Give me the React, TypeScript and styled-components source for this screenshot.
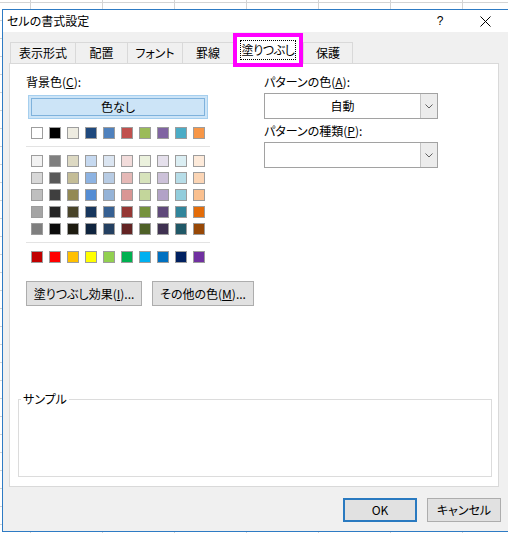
import React from 'react';
import styled, { createGlobalStyle } from 'styled-components';

const themeColors = ['#FFFFFF', '#000000', '#EEECE1', '#1F497D', '#4F81BD', '#C0504D', '#9BBB59', '#8064A2', '#4BACC6', '#F79646'];

const shadeRows = [
  ['#F2F2F2', '#7F7F7F', '#DDD9C3', '#C6D9F0', '#DBE5F1', '#F2DCDB', '#EBF1DD', '#E5E0EC', '#DBEEF3', '#FDEADA'],
  ['#D8D8D8', '#595959', '#C4BD97', '#8DB3E2', '#B8CCE4', '#E5B9B7', '#D7E3BC', '#CCC1D9', '#B7DDE8', '#FBD5B5'],
  ['#BFBFBF', '#3F3F3F', '#938953', '#548DD4', '#95B3D7', '#D99694', '#C3D69B', '#B2A2C7', '#92CDDC', '#FAC08F'],
  ['#A5A5A5', '#262626', '#494429', '#17365D', '#366092', '#953734', '#76923C', '#5F497A', '#31859B', '#E36C09'],
  ['#7F7F7F', '#0C0C0C', '#1D1B10', '#0F243E', '#244061', '#632423', '#4F6128', '#3F3151', '#205867', '#974806'],
];

const standardColors = ['#C00000', '#FF0000', '#FFC000', '#FFFF00', '#92D050', '#00B050', '#00B0F0', '#0070C0', '#002060', '#7030A0'];

const tabs = [
  { label: '表示形式', width: 65 },
  { label: '配置', width: 52 },
  { label: 'フォント', width: 55 },
  { label: '罫線', width: 51 },
  { label: '塗りつぶし', width: 70, active: true },
  { label: '保護', width: 50 },
];

const GlobalStyle = createGlobalStyle`
  html, body {
    margin: 0;
    padding: 0;
  }

  body {
    width: 508px;
    height: 533px;
    overflow: hidden;
    background-color: #fff;
    /* the spreadsheet grid behind the dialog */
    background-image:
      linear-gradient(to right, #d4d4d4 1px, transparent 1px),
      linear-gradient(to bottom, #d4d4d4 1px, transparent 1px);
    background-size: 72px 100%, 100% 18px;
    background-position: 30px 0, 0 2px;
    font-family: "Noto Sans CJK JP", "Noto Sans", sans-serif;
    font-size: 12px;
    font-feature-settings: "palt";
    color: #000;
  }

  * {
    box-sizing: border-box;
  }
`;

const ChevronDown = () => (
  <svg width="8" height="5" viewBox="0 0 8 5">
    <path d="M0.5 0.5 L4 4 L7.5 0.5" fill="none" stroke="#606060" strokeWidth="1" />
  </svg>
);

const CloseIcon = () => (
  <svg width="11" height="11" viewBox="0 0 11 11">
    <path d="M0.5 0.5 L10.5 10.5 M10.5 0.5 L0.5 10.5" stroke="#000" strokeWidth="1" />
  </svg>
);

const App: React.FC = () => {
  return (
    <>
      <GlobalStyle />
      <Dialog>
        <TitleBar>
          <Title>セルの書式設定</Title>
          <HelpButton>?</HelpButton>
          <CloseButton>
            <CloseIcon />
          </CloseButton>
        </TitleBar>

        <Body>
          <TabRow>
            {tabs.map((tab, index) =>
              tab.active ? (
                <ActiveTab key={index} $width={tab.width}>
                  <FocusRing>{tab.label}</FocusRing>
                </ActiveTab>
              ) : (
                <Tab key={index} $width={tab.width} $last={index === tabs.length - 1}>
                  {tab.label}
                </Tab>
              )
            )}
          </TabRow>

          <Panel>
            <TopSection>
              <Column>
                <Label>
                  背景色(<u>C</u>):
                </Label>
                <NoColorButton>色なし</NoColorButton>

                <SwatchRow>
                  {themeColors.map((color) => (
                    <Swatch key={color} $color={color} />
                  ))}
                </SwatchRow>

                <Divider />

                <SwatchGrid>
                  {shadeRows.flat().map((color, index) => (
                    <Swatch key={index} $color={color} />
                  ))}
                </SwatchGrid>

                <Divider />

                <SwatchRow>
                  {standardColors.map((color) => (
                    <Swatch key={color} $color={color} />
                  ))}
                </SwatchRow>

                <ButtonRow>
                  <PushButton $width={116}>
                    塗りつぶし効果(<u>I</u>)...
                  </PushButton>
                  <PushButton $width={102}>
                    その他の色(<u>M</u>)...
                  </PushButton>
                </ButtonRow>
              </Column>

              <Column>
                <Label>
                  パターンの色(<u>A</u>):
                </Label>
                <Combo>
                  <ComboValue>自動</ComboValue>
                  <ComboArrow>
                    <ChevronDown />
                  </ComboArrow>
                </Combo>

                <Label $gap={4}>
                  パターンの種類(<u>P</u>):
                </Label>
                <Combo>
                  <ComboValue />
                  <ComboArrow>
                    <ChevronDown />
                  </ComboArrow>
                </Combo>
              </Column>
            </TopSection>

            <Spacer />

            <SampleGroup>
              <SampleLegend>サンプル</SampleLegend>
              <SampleBody />
            </SampleGroup>
          </Panel>

          <Footer>
            <DialogButton $default>OK</DialogButton>
            <DialogButton>キャンセル</DialogButton>
          </Footer>
        </Body>
      </Dialog>
    </>
  );
};

const Dialog = styled.div`
  margin: 9px 0 0 2px;
  width: 520px;
  border: 1px solid #2e7bc4;
  background: #f0f0f0;
`;

const TitleBar = styled.div`
  display: flex;
  align-items: center;
  height: 22px;
  padding: 0 13px 0 4px;
  background: #fff;
`;

const Title = styled.div`
  flex: 1;
  line-height: 16px;
`;

const HelpButton = styled.div`
  width: 44px;
  text-align: center;
  line-height: 16px;
  font-family: "Liberation Sans", sans-serif;
  font-size: 12px;
`;

const CloseButton = styled.div`
  width: 46px;
  display: flex;
  justify-content: center;
  align-items: center;
`;

const Body = styled.div`
  padding: 10px 0 9px 6px;
`;

const TabRow = styled.div`
  display: flex;
  align-items: flex-start;
  height: 21px;
  margin-left: 1px;
`;

const Tab = styled.div<{ $width: number; $last?: boolean }>`
  width: ${(p) => p.$width}px;
  height: 21px;
  display: flex;
  align-items: center;
  justify-content: center;
  line-height: 16px;
  white-space: nowrap;
  background: #f0f0f0;
  border-top: 1px solid #d9d9d9;
  border-left: 1px solid #d9d9d9;
  border-right: ${(p) => (p.$last ? '1px solid #d9d9d9' : 'none')};
`;

const ActiveTab = styled.div<{ $width: number }>`
  position: relative;
  z-index: 1;
  width: ${(p) => p.$width}px;
  height: 34px;
  margin-top: -9px;
  display: flex;
  justify-content: center;
  align-items: flex-start;
  background: #fff;
  border: 4px solid #ff00ff;
`;

const FocusRing = styled.span`
  margin-top: 3px;
  width: 56px;
  height: 20px;
  display: flex;
  align-items: center;
  justify-content: center;
  line-height: 16px;
  white-space: nowrap;
  letter-spacing: -0.4px;
  border: 1px dotted #000;
`;

const Panel = styled.div`
  width: 490px;
  height: 424px;
  display: flex;
  flex-direction: column;
  background: #fff;
  border: 1px solid #d9d9d9;
`;

const TopSection = styled.div`
  display: grid;
  grid-template-columns: 238px 174px;
  padding: 10px 0 0 16px;
`;

const Column = styled.div`
  display: flex;
  flex-direction: column;
  align-items: flex-start;
`;

const Label = styled.div<{ $gap?: number }>`
  height: 16px;
  line-height: 16px;
  margin-top: ${(p) => p.$gap || 0}px;
  white-space: nowrap;
`;

const NoColorButton = styled.div`
  margin: 5px 0 0 2px;
  width: 180px;
  height: 24px;
  display: flex;
  align-items: center;
  justify-content: center;
  line-height: 16px;
  background: #cce4f7;
  border: 1px solid #a6cfee;
  outline: 1px solid #7fb2dc;
  outline-offset: -4px;
`;

const SwatchRow = styled.div`
  display: flex;
  gap: 6px;
  margin-top: 8px;
  padding-left: 5px;
`;

const SwatchGrid = styled.div`
  display: grid;
  grid-template-columns: repeat(10, 12px);
  gap: 5px 6px;
  margin-top: 8px;
  padding-left: 5px;
`;

const Swatch = styled.div<{ $color: string }>`
  width: 12px;
  height: 12px;
  background: ${(p) => p.$color};
  border: 1px solid #9d9d9d;
`;

const Divider = styled.div`
  width: 184px;
  height: 1px;
  margin-top: 7px;
  background: #e3e3e3;
`;

const ButtonRow = styled.div`
  display: flex;
  gap: 10px;
  margin-top: 18px;
`;

const PushButton = styled.div<{ $width: number }>`
  width: ${(p) => p.$width}px;
  height: 25px;
  display: flex;
  align-items: center;
  justify-content: center;
  line-height: 16px;
  white-space: nowrap;
  background: #e1e1e1;
  border: 1px solid #adadad;
`;

const Combo = styled.div`
  width: 174px;
  height: 26px;
  margin-top: 3px;
  display: flex;
  background: #fff;
  border: 1px solid #a2a2a2;
`;

const ComboValue = styled.div`
  flex: 1;
  display: flex;
  align-items: center;
  justify-content: center;
  line-height: 16px;
`;

const ComboArrow = styled.div`
  width: 17px;
  display: flex;
  align-items: center;
  justify-content: center;
  background: #ececec;
  border-left: 1px solid #c4c4c4;
`;

const Spacer = styled.div`
  flex: 1;
`;

const SampleGroup = styled.fieldset`
  margin: 0 6px 9px 8px;
  padding: 0;
  border: 1px solid #dcdcdc;
`;

const SampleLegend = styled.legend`
  margin-left: 2px;
  padding: 0 2px;
  line-height: 16px;
  font-size: 12px;
`;

const SampleBody = styled.div`
  height: 69px;
`;

const Footer = styled.div`
  display: flex;
  justify-content: flex-end;
  gap: 10px;
  margin-top: 11px;
  padding-right: 20px;
`;

const DialogButton = styled.div<{ $default?: boolean }>`
  width: 74px;
  height: 24px;
  display: flex;
  align-items: center;
  justify-content: center;
  line-height: 16px;
  background: #e1e1e1;
  border: ${(p) => (p.$default ? '2px solid #2a7ac0' : '1px solid #adadad')};
`;

export default App;
